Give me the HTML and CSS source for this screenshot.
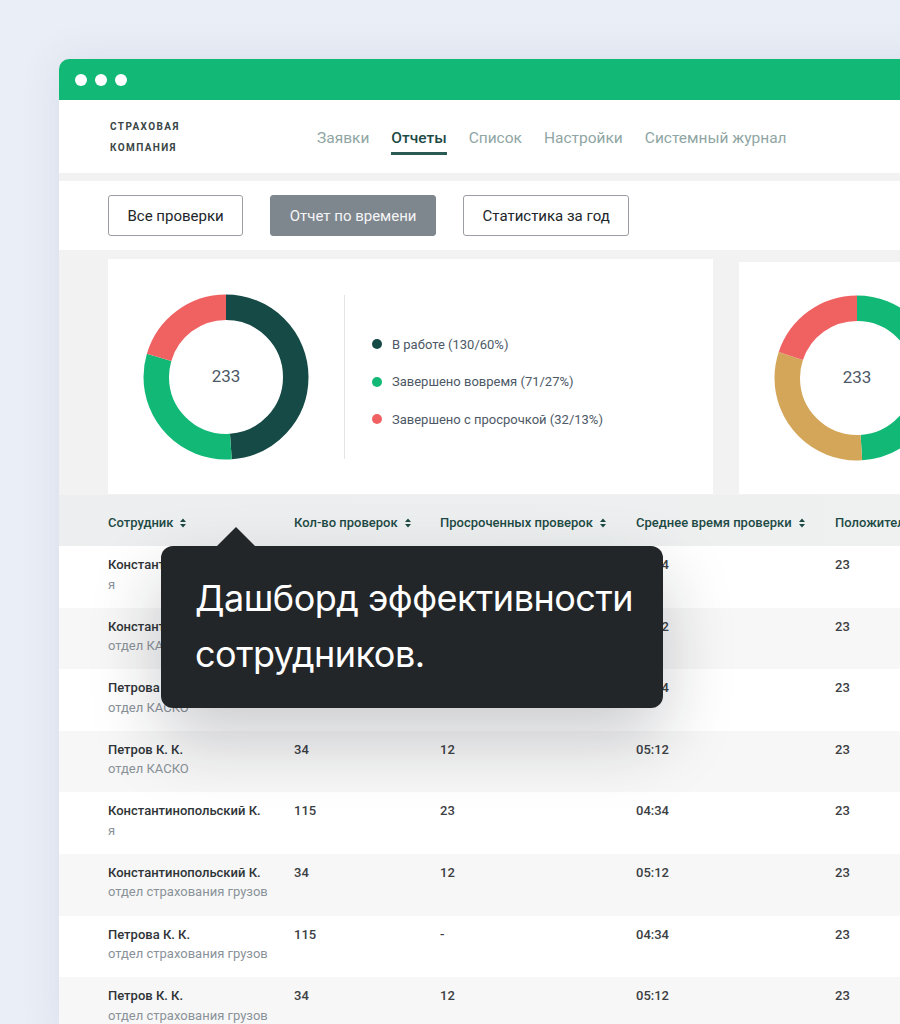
FILE: index.html
```html
<!DOCTYPE html>
<html lang="ru">
<head>
<meta charset="utf-8">
<title>Отчеты</title>
<link rel="stylesheet" href="styles.css">
</head>
<body>
<div class="window">
  <div class="titlebar"><span class="dot"></span><span class="dot"></span><span class="dot"></span></div>
  <header class="nav">
    <div class="logo">СТРАХОВАЯ<br>КОМПАНИЯ</div>
    <nav class="menu">
      <a class="menu-item">Заявки</a>
      <a class="menu-item active">Отчеты</a>
      <a class="menu-item">Список</a>
      <a class="menu-item">Настройки</a>
      <a class="menu-item">Системный журнал</a>
    </nav>
  </header>
  <div class="toolbar">
    <button class="btn">Все проверки</button>
    <button class="btn btn-active">Отчет по времени</button>
    <button class="btn">Статистика за год</button>
  </div>
  <section class="cards">
    <div class="card card-main">
      <svg class="donut" width="166" height="166" viewBox="0 0 166 166">
        <g transform="rotate(-90 83 83)" fill="none" stroke-width="25.5">
          <circle cx="83" cy="83" r="69.75" stroke="#164a46" stroke-dasharray="213.8 438.25" stroke-dashoffset="0"/>
          <circle cx="83" cy="83" r="69.75" stroke="#12b876" stroke-dasharray="134.4 438.25" stroke-dashoffset="-213.8"/>
          <circle cx="83" cy="83" r="69.75" stroke="#f06262" stroke-dasharray="90.1 438.25" stroke-dashoffset="-348.2"/>
        </g>
        <text x="83" y="82" class="donut-num" text-anchor="middle" dominant-baseline="central">233</text>
      </svg>
      <div class="divider"></div>
      <ul class="legend">
        <li class="legend-item"><span class="ldot ldot-dark"></span>В работе (130/60%)</li>
        <li class="legend-item"><span class="ldot ldot-green"></span>Завершено вовремя (71/27%)</li>
        <li class="legend-item"><span class="ldot ldot-red"></span>Завершено с просрочкой (32/13%)</li>
      </ul>
    </div>
    <div class="card card-second">
      <svg class="donut" width="166" height="166" viewBox="0 0 166 166">
        <g transform="rotate(-90 83 83)" fill="none" stroke-width="25.5">
          <circle cx="83" cy="83" r="69.75" stroke="#12b876" stroke-dasharray="214.3 438.25" stroke-dashoffset="0"/>
          <circle cx="83" cy="83" r="69.75" stroke="#d4a65a" stroke-dasharray="136.3 438.25" stroke-dashoffset="-214.3"/>
          <circle cx="83" cy="83" r="69.75" stroke="#f06262" stroke-dasharray="87.7 438.25" stroke-dashoffset="-350.6"/>
        </g>
        <text x="83" y="82" class="donut-num" text-anchor="middle" dominant-baseline="central">233</text>
      </svg>
    </div>
  </section>
  <div class="table">
    <div class="row head">
      <div class="th">Сотрудник <svg class="sort" width="6" height="10" viewBox="0 0 6 10"><path d="M0 4L3 0.5L6 4Z M0 6L3 9.5L6 6Z"/></svg></div>
      <div class="th">Кол-во проверок <svg class="sort" width="6" height="10" viewBox="0 0 6 10"><path d="M0 4L3 0.5L6 4Z M0 6L3 9.5L6 6Z"/></svg></div>
      <div class="th">Просроченных проверок <svg class="sort" width="6" height="10" viewBox="0 0 6 10"><path d="M0 4L3 0.5L6 4Z M0 6L3 9.5L6 6Z"/></svg></div>
      <div class="th">Среднее время проверки <svg class="sort" width="6" height="10" viewBox="0 0 6 10"><path d="M0 4L3 0.5L6 4Z M0 6L3 9.5L6 6Z"/></svg></div>
      <div class="th">Положительных оценок <svg class="sort" width="6" height="10" viewBox="0 0 6 10"><path d="M0 4L3 0.5L6 4Z M0 6L3 9.5L6 6Z"/></svg></div>
    </div>
    <div class="row">
      <div class="td"><div class="name">Константинопольский К.</div><div class="dept">я</div></div>
      <div class="td">115</div><div class="td">23</div><div class="td">04:34</div><div class="td">23</div>
    </div>
    <div class="row">
      <div class="td"><div class="name">Константинопольский К.</div><div class="dept">отдел КАСКО</div></div>
      <div class="td">34</div><div class="td">12</div><div class="td">05:12</div><div class="td">23</div>
    </div>
    <div class="row">
      <div class="td"><div class="name">Петрова К. К.</div><div class="dept">отдел КАСКО</div></div>
      <div class="td">115</div><div class="td">-</div><div class="td">04:34</div><div class="td">23</div>
    </div>
    <div class="row">
      <div class="td"><div class="name">Петров К. К.</div><div class="dept">отдел КАСКО</div></div>
      <div class="td">34</div><div class="td">12</div><div class="td">05:12</div><div class="td">23</div>
    </div>
    <div class="row">
      <div class="td"><div class="name">Константинопольский К.</div><div class="dept">я</div></div>
      <div class="td">115</div><div class="td">23</div><div class="td">04:34</div><div class="td">23</div>
    </div>
    <div class="row">
      <div class="td"><div class="name">Константинопольский К.</div><div class="dept">отдел страхования грузов</div></div>
      <div class="td">34</div><div class="td">12</div><div class="td">05:12</div><div class="td">23</div>
    </div>
    <div class="row">
      <div class="td"><div class="name">Петрова К. К.</div><div class="dept">отдел страхования грузов</div></div>
      <div class="td">115</div><div class="td">-</div><div class="td">04:34</div><div class="td">23</div>
    </div>
    <div class="row">
      <div class="td"><div class="name">Петров К. К.</div><div class="dept">отдел страхования грузов</div></div>
      <div class="td">34</div><div class="td">12</div><div class="td">05:12</div><div class="td">23</div>
    </div>
  </div>
  <div class="tooltip">Дашборд эффективности<br>сотрудников.</div>
</div>
</body>
</html>
```
FILE: styles.css
```css
* { box-sizing: border-box; }
html, body { height: 100%; }
body {
  margin: 0;
  padding: 59px 0 0 59px;
  background: #eaeef6;
  font-family: Roboto, "Liberation Sans", sans-serif;
  overflow: hidden;
}
.window {
  position: relative;
  width: 900px;
  background: #fff;
  border-radius: 10px 0 0 0;
  box-shadow: 0 0 40px rgba(60, 80, 130, 0.10);
}
.titlebar {
  height: 41px;
  background: #12b876;
  border-radius: 10px 0 0 0;
  display: flex;
  align-items: center;
  gap: 8px;
  padding-left: 16px;
}
.dot {
  width: 12px;
  height: 12px;
  border-radius: 50%;
  background: #fff;
}
.nav {
  height: 73px;
  display: flex;
  align-items: center;
  padding-left: 51px;
}
.logo {
  width: 207px;
  flex: none;
  font-size: 10px;
  font-weight: 700;
  line-height: 21px;
  letter-spacing: 1.4px;
  color: #3a4646;
}
.menu {
  display: flex;
  gap: 22px;
  white-space: nowrap;
}
.menu-item {
  font-size: 15.5px;
  line-height: 18px;
  padding: 10px 0 5px;
  border-bottom: 3px solid transparent;
  color: #8fa6a4;
}
.menu-item.active {
  color: #1d4a45;
  font-weight: 500;
  border-bottom-color: #2a5a54;
}
.toolbar {
  border-top: 8px solid #f2f2f2;
  height: 77px;
  display: flex;
  align-items: center;
  gap: 27px;
  padding: 0 0 0 49px;
}
.btn {
  height: 41px;
  padding: 0 18.5px;
  font-family: Roboto, "Liberation Sans", sans-serif;
  font-size: 15px;
  color: #222629;
  background: #fff;
  border: 1px solid #9a9ea2;
  border-radius: 3px;
}
.btn-active {
  background: #7f878e;
  border-color: #7f878e;
  color: #f4f5f6;
}
.cards {
  background: #f2f2f2;
  display: flex;
  align-items: flex-start;
  gap: 26px;
  padding: 9px 0 1px 49px;
}
.card {
  flex: none;
  background: #fff;
  height: 235px;
  display: flex;
  align-items: center;
  padding: 0 35px;
}
.card-main { width: 605px; }
.card-second { width: 260px; margin-top: 3px; height: 232px; }
.donut { display: block; flex: none; }
.donut-num {
  font-family: Roboto, "Liberation Sans", sans-serif;
  font-size: 17px;
  fill: #4d5866;
}
.divider {
  width: 1px;
  height: 164px;
  background: #e2e4e6;
  margin-left: 35px;
}
.legend {
  list-style: none;
  margin: 10px 0 0 27px;
  padding: 0;
  display: flex;
  flex-direction: column;
  gap: 20.5px;
}
.legend-item {
  display: flex;
  align-items: center;
  font-size: 13px;
  line-height: 17px;
  color: #4d5866;
}
.ldot {
  width: 10px;
  height: 10px;
  border-radius: 50%;
  margin-right: 10px;
}
.ldot-dark { background: #164a46; }
.ldot-green { background: #12b876; }
.ldot-red { background: #f06262; }
.table { background: #fff; }
.row {
  display: grid;
  grid-template-columns: 186px 146px 196px 199px 1fr;
  padding-left: 49px;
  height: 61.6px;
  padding-top: 9px;
  font-size: 13px;
  line-height: 19.5px;
  white-space: nowrap;
}
.row:nth-child(odd) { background: #f7f7f7; }
.row.head {
  height: 51px;
  padding-top: 4px;
  align-items: center;
  background: linear-gradient(90deg, #eceeef, #eef1f0);
}
.th {
  display: flex;
  align-items: center;
  gap: 7px;
  font-weight: 500;
  color: #1e4a45;
}
.sort { fill: #1e4a45; }
.td {
  font-weight: 500;
  color: #3c4043;
}
.name { font-weight: 500; color: #2f3437; }
.dept { font-weight: 400; color: #8a9299; }
.tooltip {
  position: absolute;
  left: 102px;
  top: 487px;
  width: 502px;
  height: 162px;
  background: #232628;
  border-radius: 12px;
  padding: 24px 0 0 34px;
  font-family: Inter, "Noto Sans", sans-serif;
  font-size: 36px;
  line-height: 56px;
  letter-spacing: -0.5px;
  color: #fff;
  box-shadow: 0 30px 70px rgba(20, 25, 35, 0.22);
}
.tooltip::before {
  content: "";
  position: absolute;
  left: 56px;
  top: -19px;
  border-left: 19px solid transparent;
  border-right: 19px solid transparent;
  border-bottom: 19px solid #232628;
}
```
